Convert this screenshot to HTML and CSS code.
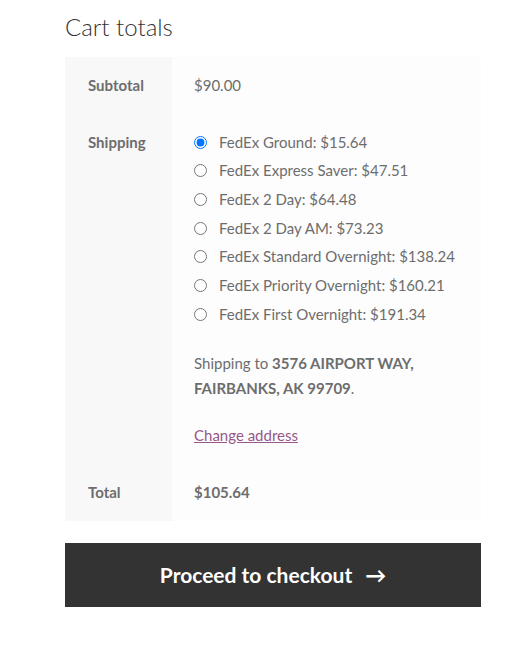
FILE: index.html
```html
<!DOCTYPE html>
<html>
<head>
<meta charset="utf-8">
<link rel="stylesheet" href="styles.css">
</head>
<body>
<div class="cart-totals">
  <h2 class="title">Cart totals</h2>
  <table class="totals">
    <tr class="row-subtotal">
      <th>Subtotal</th>
      <td>$90.00</td>
    </tr>
    <tr class="row-shipping">
      <th>Shipping</th>
      <td>
        <ul class="methods">
          <li><input type="radio" name="ship" checked><label>FedEx Ground: $15.64</label></li>
          <li><input type="radio" name="ship"><label>FedEx Express Saver: $47.51</label></li>
          <li><input type="radio" name="ship"><label>FedEx 2 Day: $64.48</label></li>
          <li><input type="radio" name="ship"><label>FedEx 2 Day AM: $73.23</label></li>
          <li><input type="radio" name="ship"><label>FedEx Standard Overnight: $138.24</label></li>
          <li><input type="radio" name="ship"><label>FedEx Priority Overnight: $160.21</label></li>
          <li><input type="radio" name="ship"><label>FedEx First Overnight: $191.34</label></li>
        </ul>
        <p class="destination">Shipping to <strong>3576 AIRPORT WAY,</strong><br><strong>FAIRBANKS, AK 99709</strong>.</p>
        <a class="change" href="#">Change address</a>
      </td>
    </tr>
    <tr class="row-total">
      <th>Total</th>
      <td><strong>$105.64</strong></td>
    </tr>
  </table>
  <a class="checkout" href="#">Proceed to checkout <span class="arrow">&#x2192;</span></a>
</div>
</body>
</html>
```
FILE: styles.css
```css
html, body {
  margin: 0;
  padding: 0;
  background: #ffffff;
}
body {
  font-family: "Lato", "Liberation Sans", sans-serif;
  color: #6d6d6d;
  font-size: 15px;
}
.cart-totals {
  width: 416px;
  margin-left: 65px;
  padding-top: 10px;
}
.title {
  margin: 0 0 13px 0;
  font-size: 24px;
  font-weight: 300;
  color: #333333;
  line-height: 34px;
}
.totals {
  width: 100%;
  border-collapse: collapse;
  border-spacing: 0;
}
.totals th {
  width: 107px;
  box-sizing: border-box;
  background: #f8f8f8;
  text-align: left;
  vertical-align: top;
  font-weight: 700;
  padding: 19px 0 0 23px;
  height: 57px;
}
.totals td {
  background: #fdfdfd;
  vertical-align: top;
  padding: 19px 22px 0 22px;
  line-height: 19px;
}
.row-subtotal th, .row-subtotal td { padding-bottom: 19px; line-height: 19px; }
.row-total th, .row-total td { padding-top: 20px; padding-bottom: 19px; line-height: 19px; }
.row-shipping td { padding-bottom: 18px; }
.methods {
  list-style: none;
  margin: 0;
  padding: 0;
}
.methods li {
  display: flex;
  align-items: center;
  height: 28.67px;
  margin-top: -5px;
  margin-bottom: 5px;
}
.methods input {
  margin: 0 12px 0 0;
  width: 13px;
  height: 13px;
}
.destination {
  margin: 22px 0 0 0;
  line-height: 25px;
}
.destination strong { font-weight: 700; }
.change {
  display: inline-block;
  margin-top: 25px;
  color: #96588a;
  text-decoration: underline;
}
.checkout {
  display: flex;
  justify-content: center;
  align-items: center;
  gap: 13px;
  margin-top: 22px;
  height: 64px;
  background: #333333;
  color: #ffffff;
  font-weight: 700;
  font-size: 21px;
  text-decoration: none;
}
.arrow { font-size: 21px; }
```
